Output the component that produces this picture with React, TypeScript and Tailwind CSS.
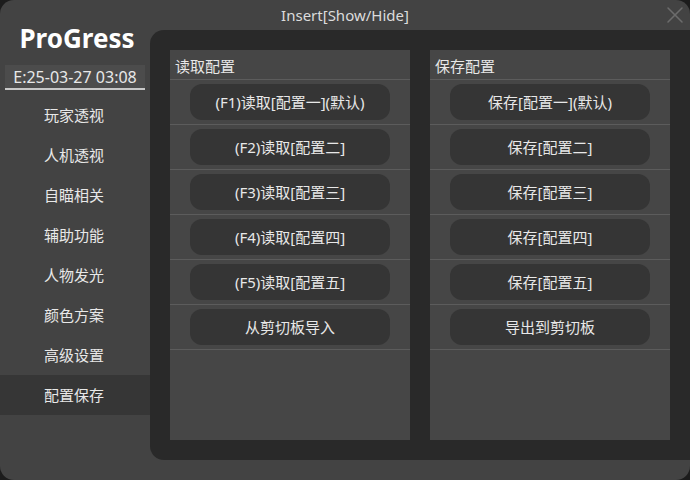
import { X } from "lucide-react";

const menu = [
  "玩家透视",
  "人机透视",
  "自瞄相关",
  "辅助功能",
  "人物发光",
  "颜色方案",
  "高级设置",
  "配置保存",
];

const loadItems = [
  "(F1)读取[配置一](默认)",
  "(F2)读取[配置二]",
  "(F3)读取[配置三]",
  "(F4)读取[配置四]",
  "(F5)读取[配置五]",
  "从剪切板导入",
];

const saveItems = [
  "保存[配置一](默认)",
  "保存[配置二]",
  "保存[配置三]",
  "保存[配置四]",
  "保存[配置五]",
  "导出到剪切板",
];

const cjk = {
  fontFamily: '"Noto Sans", "Noto Sans CJK SC", sans-serif',
};

const ConfigColumn = ({ title, items }: { title: string; items: string[] }) => {
  return (
    <div className="w-[240px] h-full bg-[#464646] flex flex-col">
      <div className="h-[30px] border-b border-[#5c5c5c] flex items-center pl-[5px] pt-[3px] text-[15px] text-[#e8e8e8]">
        {title}
      </div>
      {items.map((item) => (
        <div
          key={item}
          className="h-[45px] border-b border-[#5c5c5c] flex items-center justify-center"
        >
          <button className="w-[200px] h-[36px] rounded-[12px] bg-[#353535] text-[15px] text-[#e8e8e8]">
            {item}
          </button>
        </div>
      ))}
    </div>
  );
};

export default function App() {
  return (
    <div className="w-[690px] h-[480px] bg-[#1c1c1c] overflow-hidden" style={cjk}>
      <div className="w-full h-full bg-[#434343] rounded-[14px] flex overflow-hidden">
        <div className="w-[150px] shrink-0 flex flex-col pt-[22px]">
          <div
            className="h-[32px] leading-[32px] text-center text-[26px] font-bold text-white pl-[4px]"
            style={{ fontFamily: '"Noto Sans", sans-serif' }}
          >
            ProGress
          </div>
          <div className="mt-[11px] mx-[5px] h-[25px] bg-[#4c4c4c] border-b-2 border-[#c8c8c8] flex items-center justify-center text-[16px] text-[#e8e8e8]">
            E:25-03-27 03:08
          </div>
          <div className="mt-[5px] flex flex-col">
            {menu.map((m, i) => (
              <div
                key={m}
                className={
                  i === menu.length - 1
                    ? "h-[40px] flex items-center pl-[44px] text-[15px] text-[#e8e8e8] bg-[#363636]"
                    : "h-[40px] flex items-center pl-[44px] text-[15px] text-[#e8e8e8]"
                }
              >
                {m}
              </div>
            ))}
          </div>
        </div>
        <div className="flex-1 flex flex-col">
          <div className="h-[30px] -ml-[150px] flex items-center justify-center relative text-[15px] text-[#dcdcdc]">
            Insert[Show/Hide]
            <X
              className="absolute right-[1px] top-[1px]"
              size={28}
              stroke="#6c6c6c"
              strokeWidth={1.3}
            />
          </div>
          <div className="h-[430px] bg-[#292929] rounded-l-[14px] p-[20px] flex gap-[20px]">
            <ConfigColumn title="读取配置" items={loadItems} />
            <ConfigColumn title="保存配置" items={saveItems} />
          </div>
        </div>
      </div>
    </div>
  );
}
